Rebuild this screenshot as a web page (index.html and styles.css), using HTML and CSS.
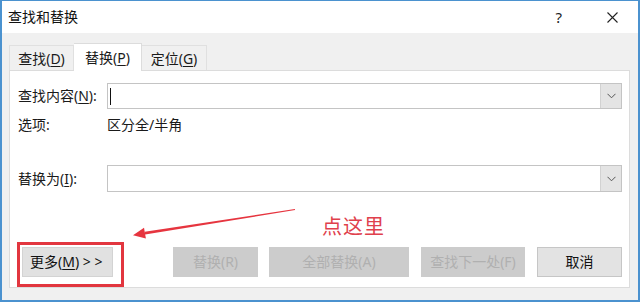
FILE: index.html
```html
<!DOCTYPE html>
<html lang="zh-CN">
<head>
<meta charset="utf-8">
<title>查找和替换</title>
<link rel="stylesheet" href="styles.css">
</head>
<body>
<div class="window">
  <div class="titlebar">
    <span class="title">查找和替换</span>
    <span class="help">?</span>
    <span class="close">
      <svg width="11" height="11" viewBox="0 0 11 11"><path d="M0.5 0.5 L10.5 10.5 M10.5 0.5 L0.5 10.5" stroke="#222" stroke-width="1.1" fill="none"/></svg>
    </span>
  </div>
  <div class="content">
    <div class="tabs">
      <div class="tab t1">查找(<u>D</u>)</div>
      <div class="tab t2 active">替换(<u>P</u>)</div>
      <div class="tab t3">定位(<u>G</u>)</div>
    </div>
    <div class="panel">
      <div class="row find-row">
        <label class="label">查找内容(<u>N</u>):</label>
        <div class="combo">
          <span class="caret"></span>
          <span class="drop"><svg width="9" height="6" viewBox="0 0 9 6"><path d="M0.5 0.8 L4.5 4.8 L8.5 0.8" stroke="#555" stroke-width="1" fill="none"/></svg></span>
        </div>
      </div>
      <div class="row opt-row">
        <span class="label">选项:</span>
        <span class="opt-val">区分全/半角</span>
      </div>
      <div class="row repl-row">
        <label class="label">替换为(<u>I</u>):</label>
        <div class="combo">
          <span class="drop"><svg width="9" height="6" viewBox="0 0 9 6"><path d="M0.5 0.8 L4.5 4.8 L8.5 0.8" stroke="#555" stroke-width="1" fill="none"/></svg></span>
        </div>
      </div>
      <div class="buttons">
        <div class="btn more">更多(<u>M</u>) &gt; &gt;</div>
        <div class="btn dis b-repl">替换(R)</div>
        <div class="btn dis b-all">全部替换(A)</div>
        <div class="btn dis b-next">查找下一处(F)</div>
        <div class="btn b-cancel">取消</div>
      </div>
    </div>
  </div>

  <div class="highlight"></div>
  <svg class="arrow" width="640" height="302" viewBox="0 0 640 302">
    <polygon points="295.1,210 294.9,209 144.7,231.7 145.1,234.6" fill="#e6353f"/>
    <polygon points="133,235.2 145.9,238.6 144,227.8" fill="#e6353f"/>
  </svg>
  <div class="note">点这里</div>
</div>
</body>
</html>
```

FILE: styles.css
```css
* { box-sizing: border-box; }
html, body { margin: 0; padding: 0; background: #fff; }
body {
  font-family: "Noto Sans", "Noto Sans CJK SC", sans-serif;
  font-size: 14px;
  color: #1a1a1a;
}
u { text-decoration: underline; text-underline-offset: 2px; }

.window {
  position: relative;
  width: 640px;
  height: 302px;
  border-style: solid;
  border-color: #4b92cf;
  border-width: 1px 2px 2px 2px;
  display: flex;
  flex-direction: column;
  background: #f0f0f0;
}

.titlebar {
  height: 32px;
  background: #fff;
  display: flex;
  align-items: center;
  padding-left: 6px;
  flex: none;
}
.title { font-size: 14px; color: #111; line-height: 1; }
.help {
  margin-left: auto;
  font-size: 15px;
  color: #222;
  margin-right: 45px;
  line-height: 1;
}
.close { display: flex; margin-right: 20px; }

.content {
  flex: 1;
  display: flex;
  flex-direction: column;
  padding: 10px 8px 12px 7px;
}

.tabs {
  display: flex;
  height: 27px;
  align-items: flex-end;
  position: relative;
  z-index: 1;
}
.tab {
  height: 25px;
  display: flex;
  align-items: center;
  justify-content: center;
  background: #f0f0f0;
  border: 1px solid #e0e0e0;
  border-bottom: none;
  color: #1a1a1a;
  line-height: 1;
  padding-top: 2px;
}
.t1 { width: 65px; }
.t2 { width: 68px; }
.t3 { width: 65px; border-left: none; }
.tab.active {
  height: 28px;
  margin-bottom: -1px;
  background: #fff;
  border-color: #dcdcdc;
  border-left: none;
  padding-top: 0;
}

.panel {
  flex: 1;
  background: #fff;
  border: 1px solid #dcdcdc;
  padding: 12px 7px 10px 8px;
  display: flex;
  flex-direction: column;
}

.row { display: flex; align-items: center; }
.label { width: 89px; flex: none; line-height: 1; }
.find-row { height: 26px; }
.opt-row { height: 22px; margin-top: 5px; }
.repl-row { height: 27px; margin-top: 29px; }
.opt-val { line-height: 1; }

.combo {
  flex: 1;
  height: 100%;
  border: 1px solid #c4c4c4;
  background: #fff;
  display: flex;
  align-items: center;
  position: relative;
}
.caret {
  width: 1px;
  height: 17px;
  background: #111;
  margin-left: 2px;
}
.drop {
  margin-left: auto;
  width: 21px;
  height: 100%;
  background: #e4e4e4;
  border-left: 1px solid #d2d2d2;
  display: flex;
  align-items: center;
  justify-content: center;
}

.buttons {
  margin-top: auto;
  display: flex;
  height: 30px;
  padding-left: 4px;
}
.btn {
  height: 30px;
  display: flex;
  align-items: center;
  justify-content: center;
  background: #e1e1e1;
  border: 1px solid #cfcfcf;
  line-height: 1;
  color: #111;
}
.more { width: 91px; border-color: #d3d3d3; justify-content: flex-start; padding-left: 7px; }
.dis { background: #cccccc; border-color: #cccccc; color: #b0b0b0; }
.b-repl { width: 85px; margin-left: 60px; }
.b-all { width: 140px; margin-left: 11px; }
.b-next { width: 104px; margin-left: 12px; }
.b-cancel { width: 85px; margin-left: 12px; background: #e3e3e3; border-color: #c6c6c6; }

.highlight {
  position: absolute;
  left: 15px;
  top: 241px;
  width: 107px;
  height: 45px;
  border: 3px solid #e2363f;
}
.arrow { position: absolute; left: -2px; top: -1px; }
.note {
  position: absolute;
  left: 320px;
  top: 213px;
  font-family: "Noto Sans CJK SC", sans-serif;
  font-size: 20px;
  line-height: 24px;
  color: #e0404c;
  letter-spacing: 1px;
}
```
